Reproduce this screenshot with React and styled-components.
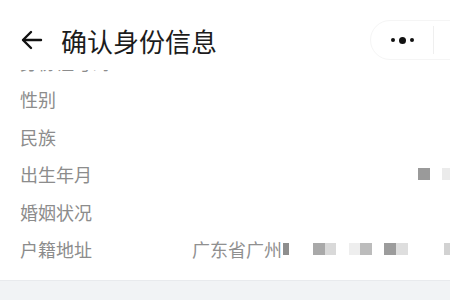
import React from 'react';
import styled, { createGlobalStyle } from 'styled-components';

const GlobalStyle = createGlobalStyle`
  html, body {
    margin: 0;
    padding: 0;
    background: #ffffff;
    overflow: hidden;
  }
  body {
    font-family: 'Noto Sans CJK SC', 'Noto Sans', sans-serif;
  }
`;

const rows = [
  { label: '身份证号码', blocks: [] },
  { label: '性别', blocks: [] },
  { label: '民族', blocks: [] },
  {
    label: '出生年月',
    blocks: [
      { gap: 226, w: 12, c: '#9a9a9a' },
      { gap: 12, w: 12, c: '#ebebeb' },
    ],
  },
  { label: '婚姻状况', blocks: [] },
  {
    label: '户籍地址',
    text: '广东省广州',
    blocks: [
      { gap: 1, w: 6, c: '#8e8e8e' },
      { gap: 24, w: 12, c: '#a9a9a9' },
      { gap: 0, w: 11, c: '#d9d9d9' },
      { gap: 13, w: 11, c: '#eeeeee' },
      { gap: 0, w: 12, c: '#bcbcbc' },
      { gap: 12, w: 12, c: '#9c9c9c' },
      { gap: 0, w: 12, c: '#dedede' },
      { gap: 36, w: 12, c: '#d2d2d2' },
    ],
  },
];

const Page = styled.div`
  width: 450px;
  height: 300px;
  display: flex;
  flex-direction: column;
  background: #f1f3f5;
  overflow: hidden;
`;

const Header = styled.header`
  height: 70px;
  box-sizing: border-box;
  padding: 10px 0 0 20px;
  display: flex;
  align-items: center;
  background: #ffffff;
  flex-shrink: 0;
`;

const BackIcon = styled.svg`
  width: 24px;
  height: 24px;
  flex-shrink: 0;
`;

const Title = styled.h1`
  margin: 0 0 0 17px;
  font-size: 26px;
  font-weight: 400;
  color: #1c1c1c;
`;

const Capsule = styled.div`
  margin-left: auto;
  margin-right: -30px;
  width: 110px;
  height: 40px;
  box-sizing: border-box;
  border: 1px solid #f5f5f5;
  border-radius: 20px;
  display: flex;
  align-items: center;
  flex-shrink: 0;
`;

const MoreButton = styled.div`
  width: 62px;
  height: 28px;
  display: flex;
  align-items: center;
  justify-content: center;
  gap: 4px;
  border-right: 1px solid #efefef;
`;

const Dot = styled.span`
  width: ${(p) => (p.$big ? 7 : 4)}px;
  height: ${(p) => (p.$big ? 7 : 4)}px;
  border-radius: 50%;
  background: #111111;
`;

const ListClip = styled.div`
  height: 210px;
  overflow: hidden;
  background: #ffffff;
  border-bottom: 1px solid #e8eaed;
  flex-shrink: 0;
`;

const List = styled.div`
  margin-top: -27px;
  padding: 0 0 12px 20px;
`;

const Row = styled.div`
  height: 37.5px;
  display: flex;
  align-items: center;
  font-size: 18px;
  color: #8c8c8c;
`;

const Label = styled.span`
  width: 172px;
  flex-shrink: 0;
`;

const Value = styled.span`
  display: flex;
  align-items: center;
  white-space: nowrap;
  color: #909090;
`;

const Mosaic = styled.span`
  display: inline-block;
  height: 12px;
  flex-shrink: 0;
`;

const Footer = styled.div`
  flex: 1;
  background: #f1f3f5;
`;

export default function App() {
  return (
    <>
      <GlobalStyle />
      <Page>
        <Header>
          <BackIcon viewBox="0 0 24 24" fill="none" stroke="#111" strokeWidth="2.4" strokeLinecap="round" strokeLinejoin="round">
            <path d="M21 12H3.5" />
            <path d="M11 4l-8 8 8 8" />
          </BackIcon>
          <Title>确认身份信息</Title>
          <Capsule>
            <MoreButton>
              <Dot />
              <Dot $big />
              <Dot />
            </MoreButton>
          </Capsule>
        </Header>
        <ListClip>
          <List>
            {rows.map((row) => (
              <Row key={row.label}>
                <Label>{row.label}</Label>
                <Value>
                  {row.text}
                  {row.blocks.map((b, i) => (
                    <Mosaic key={i} style={{ marginLeft: b.gap, width: b.w, background: b.c }} />
                  ))}
                </Value>
              </Row>
            ))}
          </List>
        </ListClip>
        <Footer />
      </Page>
    </>
  );
}
